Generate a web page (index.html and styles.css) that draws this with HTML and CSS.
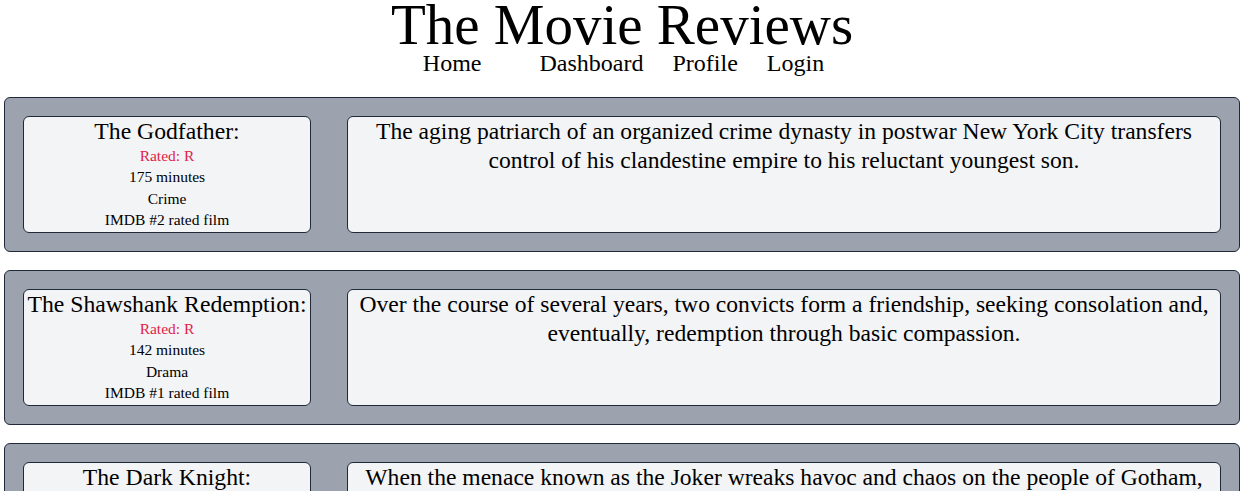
FILE: index.html
```html
<!DOCTYPE html>
<html>
<head>
<meta charset="utf-8">
<title>The Movie Reviews</title>
<link rel="stylesheet" href="styles.css">
</head>
<body>
<div class="page">
  <header class="site-header">
    <h1 class="site-title">The Movie Reviews</h1>
    <nav class="site-nav">
      <a class="nav-link nav-home" href="#">Home</a>
      <a class="nav-link" href="#">Dashboard</a>
      <a class="nav-link" href="#">Profile</a>
      <a class="nav-link" href="#">Login</a>
    </nav>
  </header>
  <main class="reviews">
    <section class="movie">
      <div class="card info">
        <h2 class="movie-title">The Godfather:</h2>
        <p class="detail rating">Rated: R</p>
        <p class="detail">175 minutes</p>
        <p class="detail">Crime</p>
        <p class="detail">IMDB #2 rated film</p>
      </div>
      <div class="card desc">
        <p class="summary">The aging patriarch of an organized crime dynasty in postwar New York City transfers control of his clandestine empire to his reluctant youngest son.</p>
      </div>
    </section>
    <section class="movie">
      <div class="card info">
        <h2 class="movie-title">The Shawshank Redemption:</h2>
        <p class="detail rating">Rated: R</p>
        <p class="detail">142 minutes</p>
        <p class="detail">Drama</p>
        <p class="detail">IMDB #1 rated film</p>
      </div>
      <div class="card desc">
        <p class="summary">Over the course of several years, two convicts form a friendship, seeking consolation and, eventually, redemption through basic compassion.</p>
      </div>
    </section>
    <section class="movie">
      <div class="card info">
        <h2 class="movie-title">The Dark Knight:</h2>
        <p class="detail rating">Rated: PG-13</p>
        <p class="detail">152 minutes</p>
        <p class="detail">Action</p>
        <p class="detail">IMDB #3 rated film</p>
      </div>
      <div class="card desc">
        <p class="summary">When the menace known as the Joker wreaks havoc and chaos on the people of Gotham, Batman must accept one of the greatest psychological and physical tests of his ability to fight injustice.</p>
      </div>
    </section>
  </main>
</div>
</body>
</html>
```

FILE: styles.css
```css
html, body {
  margin: 0;
  padding: 0;
  background: #ffffff;
}
body {
  font-family: "Liberation Serif", "Times New Roman", serif;
  color: #000;
}
.page {
  width: 1244px;
}
.site-header {
  text-align: center;
}
.site-title {
  margin: 0;
  font-weight: normal;
  font-size: 57px;
  line-height: 50px;
}
.site-nav {
  display: flex;
  justify-content: center;
  font-size: 24px;
  line-height: 28px;
  margin-top: -1px;
  padding-left: 3px;
}
.nav-link {
  color: #000;
  text-decoration: none;
  margin: 0 14.5px;
}
.nav-link.nav-home {
  margin-right: 43.5px;
}
.reviews {
  margin-top: 20px;
  padding: 0 4px;
  display: flex;
  flex-direction: column;
  gap: 18px;
}
.movie {
  display: grid;
  grid-template-columns: 288px 1fr;
  gap: 36px;
  background: #9ca3af;
  border: 1px solid #1f2937;
  border-radius: 6px;
  padding: 18px;
}
.card {
  background: #f3f4f6;
  border: 1px solid #1f2937;
  border-radius: 6px;
  text-align: center;
}
.info {
  min-height: 115px;
}
.movie-title {
  margin: 0;
  font-weight: normal;
  font-size: 23.7px;
  line-height: 28px;
  white-space: nowrap;
}
.detail {
  margin: 0;
  font-size: 15.5px;
  line-height: 21.4px;
}
.rating {
  color: #e11d48;
}
.summary {
  margin: 0;
  font-size: 23.6px;
  line-height: 29px;
}
```
